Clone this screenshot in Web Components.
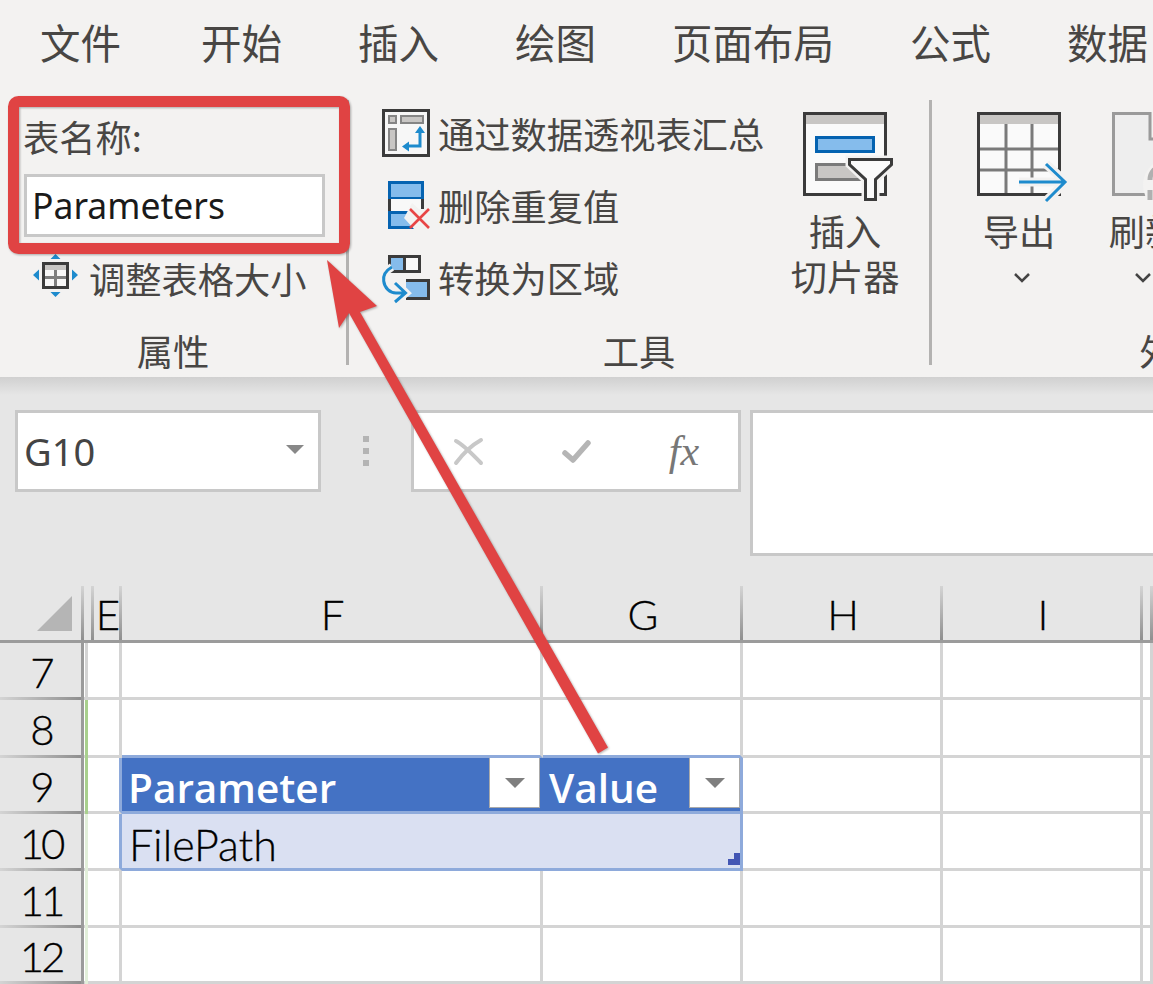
<!DOCTYPE html>
<html lang="zh-CN">
<head>
<meta charset="UTF-8">
<title>表设计</title>
<style>
    html, body { margin: 0; padding: 0; width: 1153px; height: 984px; overflow: hidden; background: #e6e6e6; }
    body { position: relative; font-family: "Noto Sans", "Noto Sans CJK SC", sans-serif; }
    svg { display: block; overflow: visible; flex: none; }
</style>
</head>
<body>

<xl-tabs>
    <xl-tab>文件</xl-tab>
    <xl-tab style="margin-left:4px">开始</xl-tab>
    <xl-tab>插入</xl-tab>
    <xl-tab>绘图</xl-tab>
    <xl-tab>页面布局</xl-tab>
    <xl-tab>公式</xl-tab>
    <xl-tab>数据</xl-tab>
</xl-tabs>

<xl-ribbon>
    <rb-group stack style="width:349px">
        <rb-namefield>
            <span slot="label">表名称:</span>
            Parameters
        </rb-namefield>
        <rb-cmd style="margin-left:33px;margin-top:5px">
            <svg slot="icon" width="45" height="43" viewBox="0 0 45 43" style="margin:-5px 3px 0 0">
                <rect x="10.5" y="9.5" width="24" height="24" fill="#f8f8f8" stroke="#3b3b3b" stroke-width="3"/>
                <rect x="12" y="11" width="21" height="5" fill="#c8c6c4"/>
                <path d="M12 23.5H33M22.5 16V32" stroke="#7f7f7f" stroke-width="3" fill="none"/>
                <path d="M22.5 0L27.5 5H17.5ZM22.5 43L17.5 38H27.5ZM0 21L6 15.5V26.5ZM45 21L39 26.5V15.5Z" fill="#1e8bcd"/>
            </svg>
            调整表格大小
        </rb-cmd>
        <span slot="label">属性</span>
    </rb-group>

    <rb-group style="width:583px;--pad:33px">
        <rb-stack>
            <rb-cmd>
                <svg slot="icon" width="48" height="48" viewBox="0 0 48 48">
                    <rect x="1.5" y="1.5" width="45" height="45" fill="#f7f7f7" stroke="#3b3b3b" stroke-width="3"/>
                    <path d="M7 7h7v7H7zM19 7h22v7H19zM7 20h7v21H7z" fill="#c8c6c4" stroke="#858585" stroke-width="2"/>
                    <path d="M38 23V37H26" fill="none" stroke="#1e8bcd" stroke-width="3"/>
                    <path d="M38 17L43 24H33ZM20 37.5L27 32.5V42.5Z" fill="#1e8bcd"/>
                </svg>
                通过数据透视表汇总
            </rb-cmd>
            <rb-cmd>
                <svg slot="icon" width="48" height="48" viewBox="-6 0 48 48">
                    <rect x="1.5" y="1.5" width="33" height="16" fill="#85bcec" stroke="#0563b1" stroke-width="3"/>
                    <path d="M1.5 18V31H34.5V18Z" fill="#f8f8f8"/>
                    <path d="M1.5 18V31M34.5 18V31" stroke="#3b3b3b" stroke-width="3" fill="none"/>
                    <rect x="1.5" y="31.5" width="33" height="15" fill="#85bcec" stroke="#0563b1" stroke-width="3"/>
                    <path d="M24 22L31 28H43V48H26L16 37Z" fill="#f3f2f1"/>
                    <path d="M22 28L41 47M41 28L22 47" stroke="#e84545" stroke-width="2.6" fill="none"/>
                </svg>
                删除重复值
            </rb-cmd>
            <rb-cmd>
                <svg slot="icon" width="48" height="48" viewBox="0 -1 48 48">
                    <rect x="7.5" y="2.5" width="30" height="15" fill="#f8f8f8" stroke="#3b3b3b" stroke-width="3"/>
                    <rect x="9" y="4" width="13" height="12" fill="#85bcec"/>
                    <path d="M22.5 2V18" stroke="#3b3b3b" stroke-width="3"/>
                    <path d="M24 26.5H46.5V44.5H24" fill="#85bcec" stroke="#3b3b3b" stroke-width="3"/>
                    <path d="M10 13C3 17 1 22 1.7 27C2.5 34 8 39 14 39H23M13 28L24 39L13 48" fill="none" stroke="#f3f2f1" stroke-width="8"/>
                    <path d="M10 13C3 17 1 22 1.7 27C2.5 34 8 39 14 39H23M13 29L23.5 39L13 48" fill="none" stroke="#1e8bcd" stroke-width="3"/>
                </svg>
                转换为区域
            </rb-cmd>
        </rb-stack>
        <rb-big style="margin-left:28px">
            <svg slot="icon" width="84" height="84" viewBox="0 0 84 84">
                <rect x="1.5" y="1.5" width="81" height="81" fill="#fafafa" stroke="#3b3b3b" stroke-width="3"/>
                <rect x="3" y="3" width="78" height="9" fill="#c8c6c4"/>
                <rect x="13.5" y="25.5" width="57" height="14" fill="#85bcec" stroke="#0563b1" stroke-width="3"/>
                <rect x="13.5" y="52.5" width="44" height="15" fill="#c8c6c4" stroke="#7a7a7a" stroke-width="3"/>
                <path d="M46.5 47.5H88.5V52.5L72.5 67.5V87.5H62.5V67.5L46.5 52.5Z" fill="#f3f2f1" stroke="#f3f2f1" stroke-width="8"/>
                <path d="M46.5 47.5H88.5V52.5L72.5 67.5V87.5H62.5V67.5L46.5 52.5Z" fill="#fafafa" stroke="#3b3b3b" stroke-width="3"/>
            </svg>
            插入<br>切片器
        </rb-big>
        <span slot="label">工具</span>
    </rb-group>

    <rb-group style="width:596px;--pad:33px;border:0">
        <rb-big>
            <svg slot="icon" width="84" height="84" viewBox="0 0 84 84">
                <rect x="1.5" y="1.5" width="81" height="81" fill="#fafafa" stroke="#3b3b3b" stroke-width="3"/>
                <rect x="3" y="3" width="78" height="9" fill="#c8c6c4"/>
                <path d="M29 12V81M55 12V81M3 37H81M3 58H81" stroke="#7a7a7a" stroke-width="3" fill="none"/>
                <path d="M42 70H89M69 52L89 70L69 89" fill="none" stroke="#f3f2f1" stroke-width="9"/>
                <path d="M42 70H88M69 52L88 70L69 89" fill="none" stroke="#1e8bcd" stroke-width="3"/>
            </svg>
            导出
            <svg slot="more" width="16" height="9" viewBox="0 0 16 9" style="margin-left:6px"><path d="M1 1L8 8L15 1" fill="none" stroke="#444" stroke-width="2.5"/></svg>
        </rb-big>
        <rb-big style="width:72px;margin-left:36px">
            <svg slot="icon" width="84" height="84" viewBox="0 0 84 84" style="margin-left:18px">
                <path d="M1.5 1.5H38V27H84V82.5H1.5Z" fill="#eeeeee" stroke="#9a9a9a" stroke-width="3"/>
                <circle cx="58" cy="73" r="27" fill="#f3f2f1"/>
                <path d="M38 68C38 60 44 55 50 53M38 78V88" fill="none" stroke="#b0b0b0" stroke-width="5"/>
            </svg>
            刷新
            <svg slot="more" width="16" height="9" viewBox="0 0 16 9" style="margin-right:4px"><path d="M1 1L8 8L15 1" fill="none" stroke="#444" stroke-width="2.5"/></svg>
        </rb-big>
        <span slot="label">外部表数据</span>
    </rb-group>
</xl-ribbon>

<xl-formula>
    <xl-namebox>G10</xl-namebox>
    <xl-fxbox>
        <svg width="28" height="26" viewBox="0 0 28 26"><path d="M2 3C10 7 20 18 27 25M2 25C8 17 18 7 27 2" fill="none" stroke="#c8c8c8" stroke-width="4" stroke-linecap="round"/></svg>
        <svg width="28" height="22" viewBox="0 0 28 22"><path d="M3 13L11 20L26 3" fill="none" stroke="#b5b5b5" stroke-width="5.5" stroke-linecap="round" stroke-linejoin="round"/></svg>
        <span slot="fx">fx</span>
    </xl-fxbox>
</xl-formula>

<xl-sheet>
    <xl-corner></xl-corner>
    <xl-col></xl-col>
    <xl-col>E</xl-col>
    <xl-col>F</xl-col>
    <xl-col>G</xl-col>
    <xl-col>H</xl-col>
    <xl-col>I</xl-col>
    <xl-col></xl-col>

    <xl-row-head>7</xl-row-head>
    <xl-cell kind="gutter" tone="plain"></xl-cell>
    <xl-cell></xl-cell><xl-cell></xl-cell><xl-cell></xl-cell><xl-cell></xl-cell><xl-cell></xl-cell>

    <xl-row-head>8</xl-row-head>
    <xl-cell kind="gutter" tone="strong"></xl-cell>
    <xl-cell kind="above-table"></xl-cell><xl-cell kind="above-table"></xl-cell><xl-cell></xl-cell><xl-cell></xl-cell><xl-cell></xl-cell>

    <xl-row-head>9</xl-row-head>
    <xl-cell kind="gutter" tone="strong" edge></xl-cell>
    <xl-cell kind="th">Parameter<xl-filter slot="end"></xl-filter></xl-cell>
    <xl-cell kind="th" last>Value<xl-filter slot="end"></xl-filter></xl-cell>
    <xl-cell></xl-cell><xl-cell></xl-cell><xl-cell></xl-cell>

    <xl-row-head>10</xl-row-head>
    <xl-cell kind="gutter" tone="soft" edge></xl-cell>
    <xl-cell kind="td">FilePath</xl-cell>
    <xl-cell kind="td" last><xl-grip slot="end"></xl-grip></xl-cell>
    <xl-cell></xl-cell><xl-cell></xl-cell><xl-cell></xl-cell>

    <xl-row-head>11</xl-row-head>
    <xl-cell kind="gutter" tone="soft"></xl-cell>
    <xl-cell></xl-cell><xl-cell></xl-cell><xl-cell></xl-cell><xl-cell></xl-cell><xl-cell></xl-cell>

    <xl-row-head>12</xl-row-head>
    <xl-cell kind="gutter" tone="soft"></xl-cell>
    <xl-cell></xl-cell><xl-cell></xl-cell><xl-cell></xl-cell><xl-cell></xl-cell><xl-cell></xl-cell>
</xl-sheet>

<xl-callout></xl-callout>

<script>
    // small helper, every element is only a shadow root with a style and some slots
    function register(tag, html) {
        const template = document.createElement('template');
        template.innerHTML = html;
        customElements.define(tag, class extends HTMLElement {
            constructor() {
                super();
                this.attachShadow({mode: 'open'}).appendChild(template.content.cloneNode(true));
            }
        });
    }

    const cjk = '"Noto Sans CJK SC", "Noto Sans", sans-serif';
    const cellFont = 'Lato, "Noto Sans", sans-serif';

    register('xl-tabs', `<style>
        :host { display: flex; height: 90px; padding: 18px 0 0 40px; gap: 76px; box-sizing: border-box;
                background: #f3f2f1; overflow: hidden; white-space: nowrap; }
    </style><slot></slot>`);

    register('xl-tab', `<style>
        :host { display: block; font: 400 40.5px/48px ${cjk}; color: #484644; }
    </style><slot></slot>`);

    register('xl-ribbon', `<style>
        :host { display: flex; height: 287px; padding: 10px 0 12px; box-sizing: border-box;
                background: #f3f2f1; overflow: hidden; }
    </style><slot></slot>`);

    register('rb-group', `<style>
        :host { display: flex; flex-direction: column; flex: none; box-sizing: border-box;
                border-right: 3px solid #b3b2b1; font: 400 36.25px/45px ${cjk}; color: #484644; }
        .body { display: flex; flex: 1; min-height: 0; padding-left: var(--pad, 0); }
        :host([stack]) .body { flex-direction: column; }
        .label { height: 30px; line-height: 30px; text-align: center; margin-top: 5px; white-space: nowrap; }
    </style>
    <div class="body"><slot></slot></div>
    <div class="label"><slot name="label"></slot></div>`);

    register('rb-namefield', `<style>
        :host { display: block; width: 301px; margin-left: 24px; flex: none; }
        .caption { height: 74px; line-height: 72px; margin-left: -1px; }
        .field { height: 63px; box-sizing: border-box; border: 3px solid #c8c8c8; background: #fff;
                 padding-left: 5px; font: 400 35.5px/57px "Noto Sans", sans-serif; color: #1a1a1a; }
    </style>
    <div class="caption"><slot name="label"></slot></div>
    <div class="field"><slot></slot></div>`);

    register('rb-stack', `<style>
        :host { display: flex; flex-direction: column; width: 381px; flex: none; margin-top: -3px; }
    </style><slot></slot>`);

    register('rb-cmd', `<style>
        :host { display: flex; align-items: center; height: 72px; flex: none; white-space: nowrap; }
        .icon { display: flex; margin-right: 8px; flex: none; }
        ::slotted(svg) { display: block; }
    </style>
    <div class="icon"><slot name="icon"></slot></div><slot></slot>`);

    register('rb-big', `<style>
        :host { display: flex; flex-direction: column; align-items: center; width: 108px; flex: none;
                padding-top: 12px; text-align: center; white-space: nowrap; }
        .text { margin-top: 12px; }
        .more { height: 48px; display: flex; align-items: center; }
    </style>
    <slot name="icon"></slot>
    <div class="text"><slot></slot></div>
    <div class="more"><slot name="more"></slot></div>`);

    register('xl-formula', `<style>
        :host { display: flex; align-items: flex-start; height: 209px; padding: 33px 0 0 15px; box-sizing: border-box;
                background: linear-gradient(#d0d0d0, #e6e6e6 18px); overflow: hidden; }
        .input { flex: 1; height: 146px; margin-left: 9px; box-sizing: border-box; border: 3px solid #c8c8c8;
                 border-right: 0; background: #fff; }
    </style>
    <slot></slot>
    <div class="input"></div>`);

    register('xl-namebox', `<style>
        :host { display: flex; align-items: center; justify-content: space-between; width: 306px; height: 82px;
                box-sizing: border-box; border: 3px solid #c8c8c8; background: #fff; padding: 0 14px 0 6px;
                margin-right: 90px; flex: none; position: relative;
                font: 400 38px/1 "Noto Sans", sans-serif; color: #444; }
        .tri { width: 0; height: 0; border: 9px solid transparent; border-top-color: #888; border-bottom: 0; margin-top: -3px; }
        .dots { position: absolute; left: 345px; top: 23px; display: flex; flex-direction: column; gap: 6px; }
        .dots i { display: block; width: 6px; height: 6px; background: #b4b4b4; }
    </style>
    <slot></slot><div class="tri"></div>
    <div class="dots"><i></i><i></i><i></i></div>`);

    register('xl-fxbox', `<style>
        :host { display: grid; grid-template-columns: repeat(3, 1fr); justify-items: center; align-items: center;
                width: 330px; height: 82px; box-sizing: border-box; border: 3px solid #c8c8c8; background: #fff; flex: none; }
        ::slotted(span) { font: italic 400 42px/1 "Liberation Serif", serif; color: #777; }
    </style><slot></slot><slot name="fx"></slot>`);

    register('xl-sheet', `<style>
        :host { display: grid; grid-template-columns: 84px 10px 28px 421px 200px 200px 200px 10px;
                grid-template-rows: 57px 57px 58px 56px 57px 57px 56px; background: #fff; overflow: hidden; }
    </style><slot></slot>`);

    register('xl-corner', `<style>
        :host { display: flex; justify-content: flex-end; box-sizing: border-box; padding: 10px 12px 9px 0;
                background: #e6e6e6; border-bottom: 3px solid #9b9b9b; position: relative; }
        .tri { width: 35px; height: 35px; background: #b5b5b5; clip-path: polygon(100% 0, 100% 100%, 0 100%); }
        .sep { position: absolute; right: 0; top: 0; bottom: 0; width: 3px; background: linear-gradient(#d4d4d4, #8f8f8f); }
    </style><div class="tri"></div><div class="sep"></div>`);

    register('xl-col', `<style>
        :host { display: flex; align-items: flex-end; justify-content: center; box-sizing: border-box; padding-bottom: 1px;
                background: #e6e6e6; border-bottom: 3px solid #9b9b9b; position: relative; overflow: visible;
                font: 300 42px/50px ${cellFont}; -webkit-text-stroke: .3px #000; color: #000; }
        .sep { position: absolute; right: 0; top: 0; bottom: 0; width: 3px; background: linear-gradient(#d4d4d4, #8f8f8f); }
    </style><slot></slot><div class="sep"></div>`);

    register('xl-row-head', `<style>
        :host { display: flex; align-items: center; justify-content: center; box-sizing: border-box; padding-left: 1px;
                background: #e6e6e6; border-right: 3px solid #9b9b9b; position: relative;
                font: 300 42px/50px ${cellFont}; letter-spacing: -3px; -webkit-text-stroke: .3px #000; color: #000; }
        .line { position: absolute; left: 0; right: 0; bottom: 0; height: 3px; background: linear-gradient(90deg, #d4d4d4, #8f8f8f); }
    </style><slot></slot><div class="line"></div>`);

    register('xl-cell', `<style>
        :host { display: flex; justify-content: space-between; box-sizing: border-box; position: relative;
                border-right: 3px solid #d4d4d4; border-bottom: 3px solid #d4d4d4; white-space: nowrap;
                font: 300 43px/50px ${cellFont}; color: #000; }
        :host([kind="gutter"]) { grid-column: span 2; }
        :host([edge]) { border-right-color: #8eaadb; }
        :host([kind="above-table"]) { border-bottom-color: #8eaadb; }
        :host([kind="th"]) { background: #4472c4; color: #fff; font: 600 40.5px/50px "Open Sans", sans-serif;
                             padding: 0 3px 0 6px; border-right: 0; border-bottom-color: #8eaadb; }
        :host([kind="td"]) { background: #dae0f2; padding: 0 3px 0 7px; align-items: flex-end;
                             border-right: 0; border-bottom-color: #8eaadb; -webkit-text-stroke: .3px #000; }
        :host([last]) { border-right: 3px solid #8eaadb; padding-right: 0; }
        .text { align-self: flex-end; margin-bottom: -2px; }
        .guide { display: none; position: absolute; left: 1px; top: 0; bottom: -3px; width: 3px; }
        :host([kind="gutter"]) .guide { display: block; }
        :host([tone="plain"]) .guide { background: #d4d4d4; }
        :host([tone="strong"]) .guide { background: #a9d08e; }
        :host([tone="soft"]) .guide { background: #e2efda; }
        :host([kind="td"]) ::slotted([slot="end"]) { margin-bottom: 3px; }
    </style>
    <div class="guide"></div><div class="text"><slot></slot></div><slot name="end"></slot>`);

    register('xl-filter', `<style>
        :host { display: flex; align-items: center; justify-content: center; width: 51px; height: 50px; box-sizing: border-box;
                background: #fff; border: 1px solid #aaa; border-top: 0; flex: none; }
        .tri { width: 0; height: 0; border: 10px solid transparent; border-top-color: #7f7f7f; border-bottom: 0; }
    </style><div class="tri"></div>`);

    register('xl-grip', `<style>
        :host { display: block; width: 12px; height: 12px; background: #4356b4; flex: none;
                clip-path: polygon(50% 0, 100% 0, 100% 100%, 0 100%, 0 50%, 50% 50%); }
    </style>`);

    // the annotation drawn over the screenshot, a free canvas over everything
    register('xl-callout', `<style>
        :host { position: absolute; left: 0; top: 0; width: 1153px; height: 984px; pointer-events: none; }
        svg { display: block; filter: drop-shadow(1px 1px 1px rgba(0, 0, 0, .3)); }
    </style>
    <svg width="1153" height="984" viewBox="0 0 1153 984">
        <rect x="13.5" y="101.5" width="331" height="147" rx="5" fill="none" stroke="#e04343" stroke-width="11"/>
        <path d="M327 260L377 306L360 312L608 747.5L598 753.5L349 313L339 328Z" fill="#e04343"/>
    </svg>`);
</script>
</body>
</html>
